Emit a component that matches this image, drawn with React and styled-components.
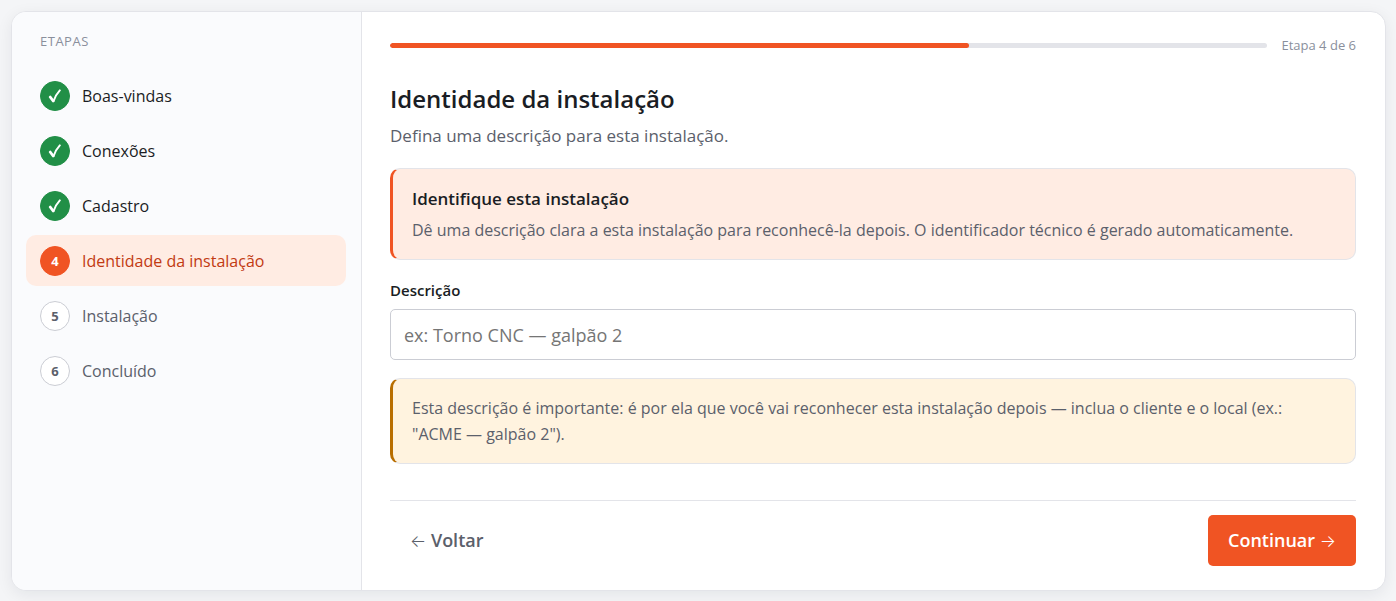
import React, {useState} from 'react';
import styled, {createGlobalStyle, css} from 'styled-components';

const GlobalStyle = createGlobalStyle`
  * {
    box-sizing: border-box;
  }

  body {
    margin: 0;
    background: #f4f5f7;
    color: #1a1d24;
    font-family: 'Segoe UI', 'Open Sans', 'Noto Sans', sans-serif;
    font-size: 16px;
    line-height: 26px;
  }
`

const Page = styled.div`
  padding: 11px 10px 10px 11px;
`

const Card = styled.div`
  display: flex;
  background: #fff;
  border: 1px solid #e3e4e9;
  border-radius: 15px;
  box-shadow: 0 4px 16px rgba(20, 25, 40, .07);
  overflow: hidden;
`

const Sidebar = styled.nav`
  flex: 0 0 350px;
  padding: 19px 15px 14px 14px;
  background: #fafbfd;
  border-right: 1px solid #e3e4e9;
`

const SidebarTitle = styled.div`
  padding: 0 14px;
  margin-bottom: 19px;
  color: #8a8f9c;
  font-size: 13px;
  line-height: 20px;
  letter-spacing: .5px;
  text-transform: uppercase;
`

const StepList = styled.ol`
  display: flex;
  flex-direction: column;
  gap: 4px;
  margin: 0;
  padding: 0;
  list-style: none;
`

const stepColors = {
  done: css`
    color: #1a1d24;
  `,
  active: css`
    color: #c23a12;
    background: #ffece3;
  `,
  pending: css`
    color: #5b606b;
  `,
}

const Step = styled.li`
  display: flex;
  align-items: center;
  gap: 12px;
  height: 51px;
  padding: 0 14px;
  border-radius: 10px;
  ${props => stepColors[props.$status]}
`

const badgeColors = {
  done: css`
    color: #fff;
    background: #218f47;
    border-color: #218f47;
  `,
  active: css`
    color: #fff;
    background: #f05423;
    border-color: #f05423;
  `,
  pending: css`
    color: #5b606b;
    background: #fff;
    border-color: #cbcdd4;
  `,
}

const Badge = styled.span`
  display: flex;
  flex: none;
  align-items: center;
  justify-content: center;
  width: 30px;
  height: 30px;
  border: 1px solid;
  border-radius: 50%;
  font-size: 13px;
  font-weight: 700;
  line-height: 20px;
  ${props => badgeColors[props.$status]}
`

const Content = styled.main`
  flex: 1;
  min-width: 0;
  padding: 24px 29px 24px 28px;
`

const ProgressRow = styled.div`
  display: flex;
  align-items: center;
  gap: 14px;
  margin-bottom: 26px;
`

const ProgressTrack = styled.div`
  flex: 1;
  height: 5px;
  background: #e3e4e9;
  border-radius: 3px;
  overflow: hidden;
`

const ProgressFill = styled.div`
  height: 100%;
  background: #f05423;
  border-radius: 3px;
`

const ProgressLabel = styled.span`
  color: #8a8f9c;
  font-size: 13px;
  line-height: 19px;
`

const Title = styled.h1`
  margin: 0 0 6px;
  font-size: 24px;
  font-weight: 600;
  line-height: 36px;
`

const Subtitle = styled.p`
  margin: 0 0 19px;
  color: #5b606b;
  font-size: 17px;
`

const Callout = styled.section`
  margin-bottom: 18px;
  padding: 16px 24px 16px 19px;
  color: #5b606b;
  background: ${props => props.$warning ? '#fff3df' : '#ffece3'};
  border: 1px solid #e3e4e9;
  border-left: 3px solid ${props => props.$warning ? '#b86e00' : '#f05423'};
  border-radius: 10px;

  p {
    margin: 0;
  }
`

const CalloutTitle = styled.h2`
  margin: 0 0 4px;
  color: #1a1d24;
  font-size: 17px;
  font-weight: 600;
  line-height: 28px;
`

const Label = styled.label`
  display: block;
  margin-bottom: 7px;
  font-size: 15px;
  font-weight: 600;
  line-height: 24px;
`

const Input = styled.input`
  display: block;
  width: 100%;
  height: 51px;
  margin-bottom: 18px;
  padding: 0 13px;
  color: #1a1d24;
  background: #fff;
  border: 1px solid #cbcdd4;
  border-radius: 5px;
  font: inherit;
  font-size: 18px;

  &::placeholder {
    color: #757575;
    opacity: 1;
  }

  &:focus {
    outline: none;
    border-color: #f05423;
  }
`

const Actions = styled.footer`
  display: flex;
  justify-content: space-between;
  margin-top: 36px;
  padding-top: 14px;
  border-top: 1px solid #e3e4e9;
`

const Button = styled.button`
  height: 51px;
  padding: 0 20px;
  color: ${props => props.$primary ? '#fff' : '#5b606b'};
  background: ${props => props.$primary ? '#f05423' : 'transparent'};
  border: 0;
  border-radius: 5px;
  font: inherit;
  font-size: 18px;
  font-weight: 600;
  cursor: pointer;
`

const Arrow = styled.span`
  font-family: Inter, sans-serif;
  font-size: 17px;
  font-weight: 300;
`

const CheckIcon = () => (
  <svg width='14' height='14' viewBox='0 0 14 14' fill='none' stroke='#fff' aria-hidden='true'>
    <path d='M2.200 8 5.200 12' strokeWidth='2.8' strokeLinecap='round' />
    <path d='M5.600 12C7 8 9 4.400 11.800 1.400' strokeWidth='2' strokeLinecap='round' />
  </svg>
)

const steps = ['Boas-vindas', 'Conexões', 'Cadastro', 'Identidade da instalação', 'Instalação', 'Concluído']

const getStatus = (number, current) => {
  if (number < current) return 'done'
  return number === current ? 'active' : 'pending'
}

const App = () => {

  const [description, setDescription] = useState('')
  const current = 4
  const percent = Math.floor(current / steps.length * 100)

  return (
    <Page>
      <GlobalStyle />
      <Card>
        <Sidebar>
          <SidebarTitle>Etapas</SidebarTitle>
          <StepList>
            {steps.map((step, i) => {
              const status = getStatus(i + 1, current)
              return (
                <Step key={step} $status={status}>
                  <Badge $status={status}>{status === 'done' ? <CheckIcon /> : i + 1}</Badge>
                  {step}
                </Step>
              )
            })}
          </StepList>
        </Sidebar>
        <Content>
          <ProgressRow>
            <ProgressTrack><ProgressFill style={{width: `${percent}%`}} /></ProgressTrack>
            <ProgressLabel>Etapa {current} de {steps.length}</ProgressLabel>
          </ProgressRow>
          <Title>Identidade da instalação</Title>
          <Subtitle>Defina uma descrição para esta instalação.</Subtitle>
          <Callout>
            <CalloutTitle>Identifique esta instalação</CalloutTitle>
            <p>Dê uma descrição clara a esta instalação para reconhecê-la depois. O identificador técnico é gerado automaticamente.</p>
          </Callout>
          <Label htmlFor='description'>Descrição</Label>
          <Input
            id='description'
            type='text'
            placeholder='ex: Torno CNC — galpão 2'
            value={description}
            onChange={e => setDescription(e.target.value)}
          />
          <Callout $warning>
            <p>Esta descrição é importante: é por ela que você vai reconhecer esta instalação depois — inclua o cliente e o local (ex.: "ACME — galpão 2").</p>
          </Callout>
          <Actions>
            <Button type='button'><Arrow>←</Arrow> Voltar</Button>
            <Button type='button' $primary>Continuar <Arrow>→</Arrow></Button>
          </Actions>
        </Content>
      </Card>
    </Page>
  )
}

export default App
